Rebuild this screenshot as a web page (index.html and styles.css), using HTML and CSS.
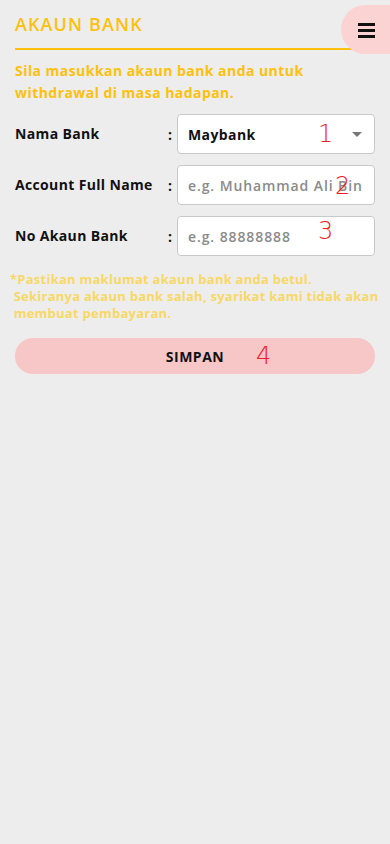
FILE: index.html
```html
<!DOCTYPE html>
<html lang="ms">
<head>
  <meta charset="UTF-8">
  <meta name="viewport" content="width=device-width, initial-scale=1.0">
  <title>Akaun Bank</title>
  <link rel="stylesheet" href="styles.css">
</head>
<body>
  <div class="container">
    <!-- Header -->
    <div class="page-header">
      <h1 class="page-title">AKAUN BANK</h1>
    </div>
    <button class="menu-btn" aria-label="Menu">
      <svg width="17" height="16" viewBox="0 0 17 16"><rect x="0" y="1" width="17" height="3"/><rect x="0" y="7" width="17" height="3"/><rect x="0" y="13" width="17" height="3"/></svg>
    </button>

    <p class="intro">Sila masukkan akaun bank anda untuk withdrawal di masa hadapan.</p>

    <!-- Bank form -->
    <div class="bank-form">
      <div class="form-row">
        <label for="bank-name">Nama Bank</label>
        <span class="colon">:</span>
        <div class="select-box">
          <span>Maybank</span>
          <span class="caret"></span>
        </div>
        <span class="mark mark-1">1</span>
      </div>
      <div class="form-row">
        <label for="full-name">Account Full Name</label>
        <span class="colon">:</span>
        <input type="text" id="full-name" placeholder="e.g. Muhammad Ali Bin Abu">
        <span class="mark mark-2">2</span>
      </div>
      <div class="form-row">
        <label for="acc-no">No Akaun Bank</label>
        <span class="colon">:</span>
        <input type="text" id="acc-no" placeholder="e.g. 88888888">
        <span class="mark mark-3">3</span>
      </div>
    </div>

    <p class="note">*Pastikan maklumat akaun bank anda betul.<br>
      &nbsp;Sekiranya akaun bank salah, syarikat kami tidak akan<br>
      &nbsp;membuat pembayaran.</p>

    <div class="save-wrap">
      <button class="save-btn">SIMPAN</button>
      <span class="mark mark-4">4</span>
    </div>
  </div>
</body>
</html>
```

FILE: styles.css
```css
html, body { margin: 0; padding: 0; }
body { background: #ededed; font-family: "Open Sans", "DejaVu Sans", sans-serif; min-height: 844px; }
.container { position: relative; padding: 0 15px; }

.page-header { padding-top: 12px; border-bottom: 2px solid #fcc10d; padding-bottom: 11px; }
.page-title { margin: 0; font-size: 18px; font-weight: 600; color: #fcc10d; line-height: 25px; letter-spacing: 1.1px; }
.menu-btn {
  position: absolute; top: 5px; right: 0; width: 49px; height: 49px;
  background: #fbd3d3; border: none; border-radius: 25px 0 0 25px;
  display: flex; align-items: center; justify-content: center; padding: 0 0 0 2px;
}
.menu-btn svg { fill: #111; }

.intro { margin: 10px 0 0; color: #fcc10d; font-size: 14px; font-weight: 700; line-height: 22px; letter-spacing: 0.45px; }

.bank-form { margin-top: 10px; display: flex; flex-direction: column; gap: 11px; }
.form-row { position: relative; display: flex; align-items: center; height: 40px; }
.form-row label { flex: 0 0 153px; white-space: nowrap; font-size: 14px; font-weight: 700; color: #111; letter-spacing: 0.35px; margin-top: -2px; }
.colon { flex: 0 0 9px; font-size: 14px; font-weight: 700; color: #111; }
.select-box, .form-row input {
  flex: 1; min-width: 0; height: 40px; box-sizing: border-box; background: #fff;
  border: 1px solid #c9c9c9; border-radius: 4px; padding: 0 10px;
  font-family: inherit; font-size: 14px; letter-spacing: 0.4px;
}
.select-box { display: flex; align-items: center; justify-content: space-between; font-weight: 700; color: #111; }
.caret { width: 0; height: 0; border-left: 5px solid transparent; border-right: 5px solid transparent; border-top: 5px solid #777; margin-right: 2px; }
.form-row input { color: #333; outline: none; font-weight: 600; letter-spacing: 0.9px; }
.form-row input::placeholder { color: #8a8a8a; }

.mark { position: absolute; color: #ee1c24; font-family: "DejaVu Sans", sans-serif; font-weight: 200; font-size: 24px; line-height: 1; pointer-events: none; }
.mark-1 { left: 303px; top: 8px; }
.mark-2 { left: 320px; top: 9px; }
.mark-3 { left: 303px; top: 3px; }

.note { margin: 15px -12px 0 -5px; white-space: nowrap; color: #f8d866; font-size: 13px; font-weight: 700; line-height: 17px; letter-spacing: 0.25px; }

.save-wrap { position: relative; margin-top: 16px; }
.save-btn {
  width: 100%; height: 36px; background: #f7c6c6; border: none; border-radius: 18px;
  font-family: inherit; font-size: 14px; font-weight: 700; color: #111; letter-spacing: 0.5px;
}
.mark-4 { left: 241px; top: 6px; }
```
